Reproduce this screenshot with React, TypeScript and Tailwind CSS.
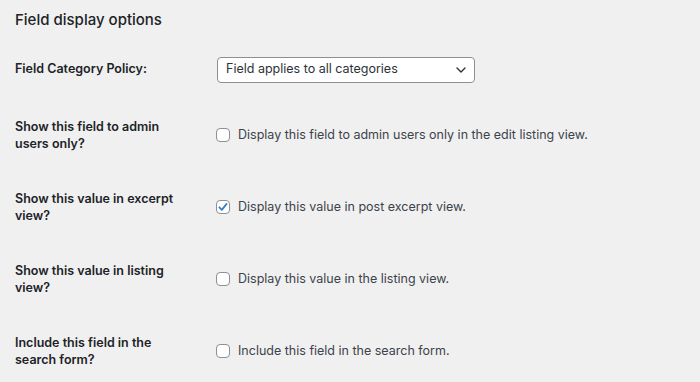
const rows = [
  {
    label: "Show this field to admin users only?",
    text: "Display this field to admin users only in the edit listing view.",
    checked: false,
  },
  {
    label: "Show this value in excerpt view?",
    text: "Display this value in post excerpt view.",
    checked: true,
  },
  {
    label: "Show this value in listing view?",
    text: "Display this value in the listing view.",
    checked: false,
  },
  {
    label: "Include this field in the search form?",
    text: "Include this field in the search form.",
    checked: false,
  },
];

function Checkbox({ checked }: { checked: boolean }) {
  return (
    <span className="w-[14px] h-[14px] shrink-0 rounded-[4px] border border-[#8c8f94] bg-white flex items-center justify-center">
      {checked && (
        <svg width="12" height="12" viewBox="0 0 12 12" fill="none">
          <path
            d="M2.4 6.3 L4.8 8.9 L9.6 2.9"
            stroke="#3582c4"
            strokeWidth="1.8"
            strokeLinecap="round"
            strokeLinejoin="round"
          />
        </svg>
      )}
    </span>
  );
}

export default function App() {
  return (
    <div
      className="w-[700px] h-[382px] bg-[#f0f0f1] text-[#1d2327] px-[15px] pt-[9px] overflow-hidden"
      style={{ fontFamily: "Inter, 'Noto Sans', sans-serif" }}
    >
      <h2 className="text-[15px] leading-[21px] font-medium">Field display options</h2>

      {/* category policy */}
      <div className="flex items-center h-[59px] mt-[10px]">
        <div className="w-[202px] shrink-0 text-[12.5px] font-semibold">Field Category Policy:</div>
        <div className="w-[258px] h-[26px] bg-white border border-[#8c8f94] rounded-[4px] flex items-center justify-between pl-[8px] pr-[8px] text-[12.5px] text-[#2c3338]">
          <span>Field applies to all categories</span>
          <svg width="10" height="6" viewBox="0 0 10 6" fill="none">
            <path d="M1 1 L5 5 L9 1" stroke="#2c3338" strokeWidth="1.4" strokeLinecap="round" strokeLinejoin="round" />
          </svg>
        </div>
      </div>

      {rows.map((row, i) => (
        <div key={i} className="flex items-center h-[72px]">
          <div className="w-[201px] shrink-0 pr-[26px] text-[12.5px] leading-[17px] font-semibold">
            {row.label}
          </div>
          <label className="flex items-center gap-[8px] text-[12.5px] text-[#3c434a]">
            <Checkbox checked={row.checked} />
            <span>{row.text}</span>
          </label>
        </div>
      ))}
    </div>
  );
}
